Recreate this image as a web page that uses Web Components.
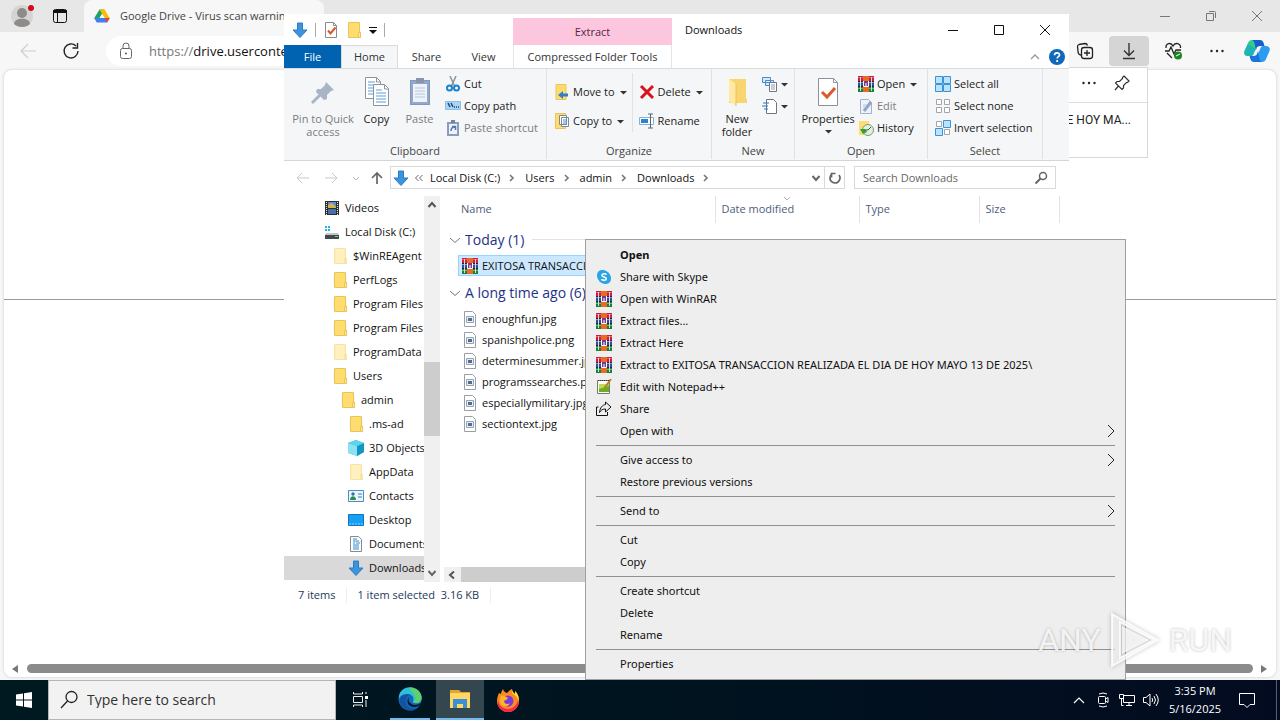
<!DOCTYPE html>
<html lang="en">
<head>
<meta charset="utf-8">
<title>Downloads</title>
<style>
  html, body {
    margin: 0;
    height: 100%;
    overflow: hidden;
  }
  body {
    font: 11px/16px "Open Sans", "Noto Sans", sans-serif;
    color: #111;
    background: #fff;
  }
</style>
</head>
<body>
<desktop-shell>
  <edge-browser></edge-browser>
  <file-explorer slot="window"></file-explorer>
  <context-menu slot="menu">
    <menu-entry strong>Open</menu-entry>
    <menu-entry icon="skype">Share with Skype</menu-entry>
    <menu-entry icon="rar">Open with WinRAR</menu-entry>
    <menu-entry icon="rar">Extract files...</menu-entry>
    <menu-entry icon="rar">Extract Here</menu-entry>
    <menu-entry icon="rar">Extract to EXITOSA TRANSACCION REALIZADA EL DIA DE HOY MAYO 13 DE 2025\</menu-entry>
    <menu-entry icon="notepad">Edit with Notepad++</menu-entry>
    <menu-entry icon="share">Share</menu-entry>
    <menu-entry submenu>Open with</menu-entry>
    <hr>
    <menu-entry submenu>Give access to</menu-entry>
    <menu-entry>Restore previous versions</menu-entry>
    <hr>
    <menu-entry submenu>Send to</menu-entry>
    <hr>
    <menu-entry>Cut</menu-entry>
    <menu-entry>Copy</menu-entry>
    <hr>
    <menu-entry>Create shortcut</menu-entry>
    <menu-entry>Delete</menu-entry>
    <menu-entry>Rename</menu-entry>
    <hr>
    <menu-entry>Properties</menu-entry>
  </context-menu>
  <run-watermark slot="mark"></run-watermark>
  <task-bar slot="taskbar"></task-bar>
</desktop-shell>

<script>
const chevron = (d, color, w = 1) => `<path d="${d}" fill="none" stroke="${color}" stroke-width="${w}"/>`;

const folderShape = (fill, edge) => `
  <path d="M2.500 .5h11v9.500h1v5.500h-12z" fill="${fill}" stroke="${edge}"/>
  <path d="M12.500 10.500h2v5h-2z" fill="#ffe9a2" stroke="${edge}"/>`;

// each entry: [viewBox width, viewBox height, markup]
const ICONS = {
  folder: [16, 16, folderShape("#ffdc70", "#ecc455")],
  folderFaint: [16, 16, folderShape("#fff0bd", "#f5e2a6")],
  down: [16, 16, `<path d="M5.500 1h5v7H15l-7 7.500L1 8h4.500z" fill="#3d94dc" stroke="#2b7cc4"/>`],
  checkDoc: [16, 18, `<path d="M2.500 1.500h8l3 3v12h-11z" fill="#fff" stroke="#8b8b8b"/><path d="M10.500 1.500v3h3" fill="none" stroke="#8b8b8b"/><path d="M5 9.500l2.500 3 5-6" fill="none" stroke="#d9532c" stroke-width="2"/>`],
  rar: [16, 16, `<path fill="#c8203f" d="M0 0h16v5H0z"/><path fill="#ee5584" d="M0 1h16v1H0z"/><path fill="#2750a8" d="M0 6h16v4H0z"/><path fill="#7a9ae2" d="M0 6h16v1H0z"/><path fill="#15803c" d="M0 11h16v5H0z"/><path fill="#4fc373" d="M0 12h16v1H0z"/><path fill="#3a1a24" d="M0 5h16v1H0zM0 10h16v1H0z"/><path fill="#e9d9ce" d="M2 1h1v14H2zM13 1h1v14h-1z"/><path fill="#ea6a1f" d="M5 0h6v16H5z"/><path fill="#7c3a8e" d="M5 5h6v6H5z"/><path d="M5.500 5v5.500h5V5M8 7v3" fill="none" stroke="#fff"/>`],
  skype: [16, 16, `<rect x="1" y="1" width="11" height="11" rx="5" fill="#2aa5e6"/><rect x="4" y="4" width="11" height="11" rx="5" fill="#2aa5e6"/><circle cx="8" cy="8" r="6.300" fill="#2aa5e6"/><path d="M10.500 5.700C9.500 4.200 6 4.300 5.900 6.200c0 2.200 4.400 1.300 4.400 3.500 0 2-3.800 2.100-4.800.4" fill="none" stroke="#fff" stroke-width="1.500"/>`],
  notepad: [16, 16, `<path d="M1.500 1.500h12v13h-12z" fill="#fdfdf5" stroke="#777"/><path d="M3 5h10v8H3z" fill="#b9dd4f"/><path d="M3 10l10-3v6H3z" fill="#6dac26"/><path d="M15 0L8.500 9" stroke="#bf7a2a" stroke-width="2"/><path d="M2 1.500h11" stroke="#333" stroke-dasharray="1 1"/>`],
  share: [16, 16, `<path d="M2.500 6H.5v8.500h11V11" fill="none" stroke="#111"/><path d="M9.500 3.500V1l5.500 5-5.500 5V8C6.500 8 5 9 3.500 11.500 4 6.500 6.500 4 9.500 3.500z" fill="none" stroke="#111"/>`],
  pin: [28, 28, `<path d="M17 4l8 8-3 1-4 4 0 4-3 1-8-8 1-3 4 0 4-4z" fill="#a9b4c6"/><path d="M11 17L3 25" stroke="#a9b4c6" stroke-width="3"/>`],
  copyBig: [28, 32, `<g fill="#fff" stroke="#8e9299"><path d="M2.500 1.500h11l4 4v17h-15z"/><path d="M10.500 8.500h11l4 4v17h-15z"/></g><path d="M5 6h7M5 9h5M5 12h5M5 15h5M5 18h5M13 14h6M13 17h10M13 20h10M13 23h10M13 26h10" stroke="#5f9ddd"/><path d="M13.500 2v4h4M21.500 9v4h4" fill="none" stroke="#8e9299"/>`],
  paste: [28, 32, `<rect x="4.500" y="4.500" width="19" height="24" fill="#94a8cc" stroke="#8397b8"/><path d="M7 8h14v18H7z" fill="#edf2fb"/><path d="M10 2h8v5h-8z" fill="#8795ac"/><path d="M9 12h10M9 15h10M9 18h10M9 21h10" stroke="#b8c5df"/>`],
  cut: [16, 16, `<path d="M5 0l4.500 10M11 0L6.500 10" stroke="#8a929c" stroke-width="1.500"/><circle cx="4.500" cy="12" r="2.500" fill="none" stroke="#1684d0" stroke-width="2"/><circle cx="11.500" cy="12" r="2.500" fill="none" stroke="#1684d0" stroke-width="2"/>`],
  copyPath: [16, 16, `<path d="M.5 3.500h15v8H.5z" fill="#abd5f5" stroke="#8bbfe8"/><path d="M3 5l2 4M6 5l2 4M9 9h1M11 9h1M13 9h1" stroke="#174a7a" stroke-width="1.500"/>`],
  pasteLink: [16, 16, `<path d="M2 2h12v14H2z" fill="#8a9dbd"/><path d="M4 4h8v10H4z" fill="#eef3fb"/><path d="M6 0h4v3H6z" fill="#74859f"/><path d="M6 11c0-3 1-4 4-4M7 6.500h3.500V10" fill="none" stroke="#547ab0" stroke-width="1.500"/>`],
  moveTo: [16, 16, `<path d="M2 .5h10v15H2z" fill="#ffdc70" stroke="#ecc455"/><path d="M14 11H8" stroke="#2f7fcb" stroke-width="3"/><path d="M9 7v8l-5-4z" fill="#2f7fcb"/>`],
  copyTo: [16, 16, `<path d="M1.500 .5h10v15h-10z" fill="#ffdc70" stroke="#ecc455"/><path d="M5.500 2.500h7v9h-7zM7.500 4.500h7v9h-7z" fill="#fff" stroke="#7a8798"/><path d="M9 7h4M9 9h4M9 11h4" stroke="#4b8fd4"/>`],
  cross: [16, 16, `<path d="M2 2l12 12M14 2L2 14" stroke="#d8131c" stroke-width="3"/>`],
  rename: [16, 16, `<path d="M.5 4.500h14v7H.5z" fill="#fff" stroke="#7fb1de"/><path d="M2 6h7v4H2z" fill="#2d83cd"/><path d="M9 1h5M9 15h5M11.500 1v14" stroke="#5e656e"/>`],
  newFolder: [28, 32, `<path d="M6 3h17v20h1v4H6z" fill="#f8d56e"/><path d="M6 3l7 5v22l-7-5z" fill="#ffe9a3"/><path d="M13 8v22" stroke="#eac45b"/>`],
  newItem: [16, 16, `<path d="M.5 1.500h8v5h-8zM3.500 4.500h8v5h-8z" fill="#d5e9fb" stroke="#4a8dcc"/><path d="M7.500 6.500h7v9h-7z" fill="#fff" stroke="#6e7680"/><path d="M9 9h4M9 11h4M9 13h4" stroke="#9099a3"/>`],
  easyAccess: [16, 16, `<path d="M4.500 1.500h7l3 3v11h-10z" fill="#fff" stroke="#6e7680"/><path d="M1 5h6M0 8h6M2 11h4" stroke="#2979c4"/>`],
  propsBig: [28, 32, `<path d="M4.500 2.500h15l4 4v23h-19z" fill="#fff" stroke="#8d9299"/><path d="M19.500 2.500v4h4" fill="none" stroke="#8d9299"/><path d="M8 16l5 5 8-9" fill="none" stroke="#db5a2e" stroke-width="3"/>`],
  edit: [16, 16, `<path d="M2.500 1.500h8l3 3v11h-11z" fill="#eef3fb" stroke="#a3b2ca"/><path d="M13 4l-7 9" stroke="#90a5c7" stroke-width="3"/><path d="M5 9h3M5 7h4" stroke="#b7c5dd"/>`],
  history: [16, 16, `<path d="M1 1h10v14H1z" fill="#ffdc70"/><circle cx="10" cy="10" r="5.500" fill="#e2eee0" stroke="#72a270"/><path d="M2 9l3 5 4-2-2-3z" fill="#2ca336"/><path d="M10 10l3-3M10 10h-3" stroke="#45504a"/>`],
  selAll: [16, 16, `<path d="M.5 .5h7v7h-7zM8.500 .5h7v7h-7zM.5 8.500h7v7h-7zM8.500 8.500h7v7h-7z" fill="#bfe1fa" stroke="#3495dc"/>`],
  selNone: [16, 16, `<path d="M1.500 1.500h5v5h-5zM9.500 1.500h5v5h-5zM1.500 9.500h5v5h-5zM9.500 9.500h5v5h-5z" fill="#fff" stroke="#a2a6aa"/>`],
  selInvert: [16, 16, `<path d="M1.500 1.500h5v5h-5zM9.500 9.500h5v5h-5z" fill="#fff" stroke="#a2a6aa"/><path d="M8.500 .5h7v7h-7zM.5 8.500h7v7h-7z" fill="#bfe1fa" stroke="#3495dc"/>`],
  video: [16, 16, `<path d="M1 1h14v14H1z" fill="#2b2e33"/><path d="M2.500 2v13M13.500 2v13" stroke="#e4e6e8" stroke-dasharray="1 1"/><path d="M4 2h8v6H4z" fill="#5a8fd6"/><path d="M4 5l4-2 4 4v1H4z" fill="#d8b44c"/><path d="M4 9h8v5H4z" fill="#476fa8"/>`],
  disk: [16, 16, `<path d="M1 2h2v2H1zM4 2h2v2H4zM1 5h2v2H1zM4 5h2v2H4z" fill="#25b3ea"/><path d="M2 9h12l1 2H1z" fill="#c3c7ca"/><path d="M1 11h14v4H1z" fill="#43484c"/><path d="M11 12h3v1h-3z" fill="#5be06d"/>`],
  cube: [16, 16, `<path d="M8 0l8 3v9l-7 4-9-3V3z" fill="#35bfe3"/><path d="M0 3l9 3v10l-9-3z" fill="#8ce2f3"/><path d="M9 6l7-3v9l-7 4z" fill="#1496c4"/><path d="M8 0l8 3-7 3-9-3z" fill="#5fd2ec"/>`],
  contact: [16, 16, `<path d="M.5 2.500h15v11H.5z" fill="#e9f5fd" stroke="#4c8dbd"/><circle cx="5" cy="6" r="1.700" fill="#33719a"/><path d="M2 12c0-5 6-5 6 0z" fill="#368554"/><path d="M10 6h4M10 9h4" stroke="#3b7ba8"/>`],
  desktop: [16, 16, `<path d="M.5 2.500h15v11H.5z" fill="#16a0f5" stroke="#1173b5"/><path d="M1 12h14" stroke="#8bd0fb" stroke-dasharray="2 1"/>`],
  document: [16, 16, `<path d="M2.500 .5h8l3 3v12h-11z" fill="#fff" stroke="#858b91"/><path d="M5 3h4M5 5h6M5 7h2M8 7h4M5 9h6M5 11h6M5 13h6" stroke="#3289ca"/>`],
  image: [16, 16, `<path d="M2.500 .5h8l3 3v12h-11z" fill="#fff" stroke="#9a9fa5"/><path d="M4.500 5.500h7v6h-7z" fill="#e6edf5" stroke="#98a3b0"/><path d="M6 7h4v3H6z" fill="#4c6f9a"/>`],
  chevDown: [12, 12, chevron("M1 4l5 4.500L11 4", "#777")],
  caret: [10, 10, chevron("M1.500 3L5 7l3.500-4", "#666", 2)],
  caretFaint: [10, 10, chevron("M2 4l3 3 3-3", "#b4b4b4", 1)],
  caretUp: [10, 10, chevron("M1 7l4-4 4 4", "#999", 1.3)],
  scrollUp: [10, 10, chevron("M1.500 7L5 3l3.500 4", "#555", 2)],
  scrollLeft: [10, 10, chevron("M7 1.500L3 5l4 3.500", "#555", 2)],
  crumb: [8, 10, chevron("M2 2l3 3-3 3", "#777", 1.6)],
  crumbs: [10, 10, chevron("M4.500 2l-3 3 3 3M8.500 2l-3 3 3 3", "#666")],
  submenu: [10, 14, chevron("M1 1l6 6-6 6", "#222")],
  tri: [7, 5, `<path d="M0 1h7L3.500 4.500z" fill="#333"/>`],
  arrowL: [16, 16, chevron("M14 8H2M7 3L2 8l5 5", "#c9c9c9")],
  arrowR: [16, 16, chevron("M2 8h12M9 3l5 5-5 5", "#c9c9c9")],
  arrowU: [16, 16, chevron("M8 14V3M3 8l5-5 5 5", "#666", 1.7)],
  refresh: [16, 16, chevron("M12 5a5 5 0 1 1-7-1M4.500 7.500V3.500h4", "#666", 1.7)],
  lens: [16, 16, `<circle cx="10" cy="6" r="3.500" fill="none" stroke="#666" stroke-width="1.500"/><path d="M7.500 8.500L2.500 13.500" stroke="#666" stroke-width="2"/>`],
  lensBig: [20, 20, `<circle cx="12.500" cy="7" r="5.500" fill="none" stroke="#222" stroke-width="1.300"/><path d="M8.500 11L2 18" stroke="#222" stroke-width="1.300"/>`],
  help: [16, 16, `<circle cx="8" cy="8" r="8" fill="#1068b8"/><path d="M5.500 6.300c0-3.400 5-3.200 5-.3 0 1.700-2.300 1.700-2.300 3.500M8.200 11v2" fill="none" stroke="#fff" stroke-width="1.700"/>`],
  min: [12, 12, chevron("M1 6.500h10", "currentColor")],
  max: [12, 12, chevron("M1.500 1.500h9v9h-9z", "currentColor")],
  close: [12, 12, chevron("M1 1l10 10M11 1L1 11", "currentColor")],
  restore: [12, 12, chevron("M1.500 3.500h7v7h-7zM4 1.500h5.500q1 0 1 1V8", "currentColor")],
  qat: [8, 10, `<path d="M0 2h8v1H0zM0 5h8L4 9z" fill="#111"/>`],
  avatar: [24, 24, `<circle cx="11" cy="12" r="11" fill="#d6d4d2"/><circle cx="11" cy="9" r="5" fill="#8e8c8b"/><path d="M3 20c0-7 16-7 16 0-4 4-12 4-16 0z" fill="#8e8c8b"/><circle cx="20" cy="4" r="3" fill="#d30a1c"/>`],
  workspace: [16, 16, `<rect x="1.500" y="1.500" width="13" height="13" rx="2" fill="none" stroke="#111"/><path d="M1 2h14v3H1z" fill="#111"/><path d="M5.500 4v10" stroke="#111"/>`],
  drive: [16, 16, `<path d="M5.500 1.500h5L8 6 3 14.500.3 10z" fill="#20a35c"/><path d="M10.500 1.500L15.700 10h-5L5.500 1.500z" fill="#fbbc05"/><path d="M.3 10h15.400L13 14.500H3z" fill="#3f7ff1"/><path d="M10.700 10h5L13 14.500z" fill="#e94435"/><path d="M8 6l2.500 4h-5z" fill="#f7f7f7"/>`],
  back: [16, 16, chevron("M16 8H1M8 1L1 8l7 7", "#cdcdcd", 1.2)],
  reload: [18, 18, chevron("M16 9a7 7 0 1 1-2-5M15.500 1v5h-5", "#222", 1.4)],
  lock: [14, 18, `<rect x="1.500" y="6.500" width="11" height="10" rx="2" fill="none" stroke="#666"/><path d="M4 6.500V4a3 3 0 0 1 6 0v2.500" fill="none" stroke="#666"/><circle cx="7" cy="11.500" r="1" fill="#555"/>`],
  collections: [18, 18, `<path d="M5 13C3 13 2 11.500 2 9L1.500 4.500Q1.500 3 3 2.500L9 1.500q2 0 2.500 2" fill="none" stroke="#222" stroke-width="1.300"/><rect x="5.500" y="5.500" width="11" height="11" rx="2.500" fill="none" stroke="#222" stroke-width="1.300"/><path d="M11 8v6M8 11h6" stroke="#222" stroke-width="1.300"/>`],
  download: [16, 18, chevron("M8 1v12M3 8.500l5 5 5-5M2 16.500h12", "#333", 1.4)],
  heart: [18, 18, `<path d="M1 9h4l2-4 3 7 2-4h5M2 6C1.500 1 7 0 9 4c2-4 8-3 7.500 2M3 11l5 5" fill="none" stroke="#222" stroke-width="1.300"/><circle cx="14" cy="13.500" r="4" fill="#1d8426"/><path d="M12 14l4-2" stroke="#fff"/>`],
  dots: [14, 4, `<g fill="#222"><circle cx="1.500" cy="2" r="1.200"/><circle cx="7" cy="2" r="1.200"/><circle cx="12.500" cy="2" r="1.200"/></g>`],
  pinLine: [16, 16, `<path d="M10 1l5 5-1.500 1.500-1 0-3 3v2.500L8 14.500 1.500 8 3 6.500h2.500l3-3V2.500zM4.500 11L1 15" fill="none" stroke="#333" stroke-width="1.200"/>`],
  copilot: [26, 24, `<path d="M8 1h7L9.500 15c-.6 1.600-1.500 2-3 2H4c-3 0-4.500-2-3.500-5L4 4c.8-2 2-3 4-3z" fill="#35c98e"/><path d="M4 5L.5 12C-.5 15 1 17 4 17h2.500c1.500 0 2.400-.4 3-2l2-5z" fill="#1fb5b8"/><path d="M8 1h8c2 0 3 1 3.600 3l.9 3h-3c-2 0-3 .6-3.800 2.500L12 13l-1-7c-.4-2.500-1-4-3-5z" fill="#1560c8"/><path d="M18 23h-7l5.500-14c.6-1.600 1.500-2 3-2H22c3 0 4.500 2 3.500 5L22 20c-.8 2-2 3-4 3z" fill="#2a9df0"/><path d="M18 23h-8c-2 0-3-1-3.600-3l-.9-3h3c2 0 3-.6 3.800-2.500L14 11l1 7c.4 2.500 1 4 3 5z" fill="#1a72dc"/><path d="M13 8l3-1-3.500 9-2.500 1z" fill="#f7f7f7"/>`],
  start: [16, 16, `<path d="M0 2.500l7-1v6H0zM8 1.300L16 0v7.500H8zM0 8.500h7v6l-7-1zM8 8.500h8V16l-8-1.300z" fill="#fff"/>`],
  taskView: [16, 16, `<path d="M1.500 4.500h9v6h-9zM1.500 0v2h9V0M1.500 15v-2h9v2M14 0v2M14 8v7" fill="none" stroke="#f0f0f0"/><path d="M13 4h3v3h-3z" fill="#fff"/>`],
  edge: [24, 24, `<circle cx="12" cy="12" r="11.500" fill="#1566b8"/><path d="M1 9C3-2 20-3 23.500 9c1 6-3 8-7 7-3-1-1-2-1-4 0-3-3-5-6-5-4 0-7 1-8.500 5z" fill="#2fbfd6"/><path d="M12 .5c7 0 12 5 11.500 11-1 5-6 5-8 4 4-4 1-9-3-12z" fill="#60cf68"/><path d="M8 12c-2 6 3 11 11 9-3 3-8 3-12 1-5-3-6-8-4-12 2-2 6-3 9-2-2 0-3.500 2-4 4z" fill="#1254a3"/><path d="M12 10c-3 2-1 7 4 8 3 0 5-1 7-2-2 3-4 4-7 4-6 0-9-7-4-10z" fill="#041a28"/>`],
  files: [24, 24, `<path d="M2 3h9l2 2h9v4H2z" fill="#e5a52b"/><path d="M2 6h20v15H2z" fill="#ffd766"/><path d="M5 12h14v9h-4v-4H9v4H5z" fill="#3c8fd3"/>`],
  firefox: [24, 24, `<path d="M3 5l2 1c0-2 1-3 2-5 1 3 2 3 4 4 2-1 2-3 5-4 0 3 2 4 3 5V3c3 3 4 6 4 10 0 6-5 11-11 11S1 19 1 13c0-3 1-6 2-8z" fill="#ff8a1e"/><path d="M2 12c1 7 6 9 11 9 5-1 8-4 9-9 2 7-4 12-10 12S0 19 2 12z" fill="#f6294c"/><path d="M16 1c0 3 2 4 3 5V3c3 3 4 6 4 10-2-5-4-6-7-8z" fill="#ffdf3c"/><circle cx="12" cy="13" r="5.500" fill="#7b3bd6"/><path d="M5 8c3-1 5 1 7 2-1 2-3 2-4 3 0 3 4 4 6 2-2 5-10 4-10-2z" fill="#ffb52b"/>`],
  trayUp: [12, 12, chevron("M1 9l5-5 5 5", "#fff", 1.2)],
  camera: [16, 16, `<rect x="3.500" y="4.500" width="7" height="7" rx="1" fill="none" stroke="#fff"/><path d="M10.500 7l2.500-1.500v5L10.500 9M4 2q4-2 8 0M4 14q4 2 8 0" fill="none" stroke="#fff"/>`],
  network: [16, 16, `<path d="M4.500 3.500h11v7h-11zM10 10.500v3M7 13.500h6M.5 2.500h4v4h-4zM2.500 6.500v7h2" fill="#030d1e" stroke="#fff"/>`],
  sound: [16, 16, `<path d="M.5 5.500H3l4-3.500v12l-4-3.500H.5zM9 6q1.500 2 0 4M11 4q3 4 0 8M13 2q4.500 6 0 12" fill="none" stroke="#fff"/>`],
  notify: [18, 18, `<path d="M1.500 2.500h15v11H12l-3 3-3-3H1.500z" fill="none" stroke="#fff"/>`],
  play: [54, 60, `<path d="M4 4L50 30 4 56zM12 12v36l34-18z" fill="#ffffffa0" fill-rule="evenodd" stroke="#fffc" stroke-width="2"/><path d="M14 16v28l27-14z" fill="#fff" opacity=".7"/>`]
};

const html = (strings, ...values) => {
  const template = document.createElement("template");
  template.innerHTML = String.raw({ raw: strings }, ...values);
  return template;
};

class BaseElement extends HTMLElement {
  constructor() {
    super();
    this.attachShadow({ mode: "open" });
  }
  connectedCallback() {
    this.shadowRoot.replaceChildren(this.render().content.cloneNode(true));
  }
}

const RESET = `
  * { box-sizing: border-box; }
  button, input { font: inherit; color: inherit; border: 0; margin: 0; padding: 0; background: none; outline: 0; }
  a { color: inherit; text-decoration: none; }
`;

customElements.define("ui-icon", class extends BaseElement {
  render() {
    const [w, h, body] = ICONS[this.getAttribute("name")];
    const width = this.getAttribute("w") || w;
    return html`<style>
      :host { display: inline-flex; flex: none; vertical-align: top; }
      svg { display: block; }
    </style><svg width="${width}" height="${width * h / w}" viewBox="0 0 ${w} ${h}" aria-hidden="true">${body}</svg>`;
  }
});

customElements.define("desktop-shell", class extends BaseElement {
  render() {
    return html`<style>
      :host { display: grid; grid-template-rows: 1fr 40px; height: 100vh; overflow: hidden; }
      .area { position: relative; display: grid; min-height: 0; }
      ::slotted([slot="window"]) { position: absolute; left: 284px; top: 14px; }
      ::slotted([slot="menu"]) { position: absolute; left: 585px; top: 239px; }
      ::slotted([slot="mark"]) { position: absolute; right: 48px; bottom: 10px; }
    </style>
    <main class="area">
      <slot></slot>
      <slot name="window"></slot>
      <slot name="menu"></slot>
      <slot name="mark"></slot>
    </main>
    <slot name="taskbar"></slot>`;
  }
});

customElements.define("edge-browser", class extends BaseElement {
  render() {
    return html`<style>${RESET}
      :host { display: grid; grid-template-rows: 32px 38px 1fr; min-width: 0; background: #f5f7f9; }
      .strip { display: flex; background: #e7e7e7; }
      .who { display: flex; align-items: center; gap: 17px; width: 84px; padding-left: 11px; }
      .tab { display: flex; align-items: center; gap: 10px; width: 240px; padding-left: 10px; background: #f7f7f7; border-radius: 8px 8px 0 0; color: #444; }
      .sys { display: flex; margin-left: auto; color: #777; }
      .sys button { display: grid; place-items: center; width: 46px; }
      .bar { display: flex; align-items: center; background: #f7f7f7; padding: 0 5px 0 20px; }
      .bar > button { display: grid; place-items: center; width: 44px; height: 30px; }
      .bar > button:first-child { width: 16px; }
      .bar > button:nth-child(2) { width: 70px; }
      .bar > button.on { width: 40px; margin: 0 2px; background: #d5d5d5; border-radius: 4px; }
      .bar > button:last-child { width: 36px; }
      .url { display: flex; align-items: center; gap: 16px; flex: 1; height: 30px; padding-left: 13px; border-radius: 15px; background: #fff; font-size: 13px; color: #777; }
      .url b { font-weight: 400; color: #111; }
      .page { position: relative; display: flex; flex-direction: column; justify-content: space-between; margin: 0 4px 3px; border-radius: 8px; background: #fff; box-shadow: 0 0 3px #c4c8cc; }
      hr { width: 100%; margin: 229px 0 0; border: 0; border-top: 1px solid #999; }
      .scroll { display: flex; align-items: center; gap: 8px; padding: 4px 8px; }
      .scroll i { border: 4px solid transparent; border-right: 6px solid #777; border-left: 0; margin-right: 1px; }
      .scroll i:last-child { border-left: 6px solid #777; border-right: 0; }
      .scroll div { flex: 1; height: 9px; border-radius: 5px; background: #8b8b8b; }
      .flyout { position: absolute; top: -3px; right: 128px; width: 340px; height: 91px; border: 1px solid #d8d8d8; background: #fff; }
      .flyout header { display: flex; align-items: center; justify-content: flex-end; gap: 18px; height: 35px; padding: 0 17px 4px 0; border-bottom: 1px solid #ddd; }
      .flyout p { margin: 9px 16px; text-align: right; font: 12px/16px Roboto, sans-serif; color: #222; }
    </style>
    <div class="strip">
      <div class="who"><ui-icon name="avatar" w="24"></ui-icon><ui-icon name="workspace"></ui-icon></div>
      <div class="tab"><ui-icon name="drive"></ui-icon>Google Drive - Virus scan warning</div>
      <div class="sys">
        <button aria-label="Minimize"><ui-icon name="min"></ui-icon></button>
        <button aria-label="Restore"><ui-icon name="restore"></ui-icon></button>
        <button aria-label="Close"><ui-icon name="close"></ui-icon></button>
      </div>
    </div>
    <div class="bar">
      <button aria-label="Back"><ui-icon name="back"></ui-icon></button>
      <button aria-label="Refresh"><ui-icon name="reload"></ui-icon></button>
      <div class="url"><ui-icon name="lock"></ui-icon><span>https://<b>drive.usercontent</b></span></div>
      <button aria-label="Collections"><ui-icon name="collections"></ui-icon></button>
      <button class="on" aria-label="Downloads"><ui-icon name="download"></ui-icon></button>
      <button aria-label="Browser essentials"><ui-icon name="heart"></ui-icon></button>
      <button aria-label="Settings"><ui-icon name="dots"></ui-icon></button>
      <button aria-label="Copilot"><ui-icon name="copilot"></ui-icon></button>
    </div>
    <div class="page">
      <hr>
      <div class="scroll"><i></i><div></div><i></i></div>
      <aside class="flyout">
        <header><ui-icon name="dots"></ui-icon><ui-icon name="pinLine"></ui-icon></header>
        <p>DE HOY MA...</p>
      </aside>
    </div>`;
  }
});

customElements.define("ribbon-button", class extends BaseElement {
  render() {
    const large = this.hasAttribute("large");
    const label = this.childNodes.length ? `<span><slot></slot></span>` : "";
    const tri = this.hasAttribute("arrow") ? `<ui-icon name="tri"></ui-icon>` : "";
    return html`<style>${RESET}
      :host { display: block; }
      button { display: flex; align-items: center; gap: 3px; height: 22px; white-space: nowrap; color: #222; }
      button:disabled { color: #7c7c7c; }
      span + ui-icon[name="tri"] { margin-left: 2px; }
      :host([large]) button { flex-direction: column; gap: 0; width: 100%; height: auto; padding-top: 3px; line-height: 13px; text-align: center; }
      :host([large]) span { margin-top: 4px; }
      :host([large]) ui-icon[name="tri"] { margin: 4px 0 0; }
      .art { display: grid; place-items: center; height: 32px; }
    </style>
    <button ${this.hasAttribute("off") ? "disabled" : ""}>
      <div class="${large ? "art" : ""}"><ui-icon name="${this.getAttribute("icon")}"></ui-icon></div>
      ${label}${tri}
    </button>`;
  }
});

customElements.define("ribbon-group", class extends BaseElement {
  render() {
    return html`<style>
      :host { display: flex; flex-direction: column; justify-content: space-between; flex: none; padding-top: 4px; border-right: 1px solid #dfe1e3; box-sizing: border-box; }
      .body { display: flex; padding-left: 7px; }
      footer { text-align: center; color: #444; }
    </style>
    <div class="body"><slot></slot></div>
    <footer>${this.getAttribute("label")}</footer>`;
  }
});

customElements.define("explorer-ribbon", class extends BaseElement {
  render() {
    return html`<style>
      :host { display: flex; height: 93px; padding-bottom: 1px; border-top: 1px solid #dadbdc; border-bottom: 1px solid #d5d6d7; background: #f5f6f7; box-sizing: border-box; }
      .col { display: flex; flex-direction: column; }
      .wide { gap: 7px; padding-top: 8px; }
      .split { margin-right: 6px; padding-right: 5px; border-right: 1px solid #e0e2e4; }
      .clip { width: 263px; } .org { width: 165px; } .new { width: 83px; } .open { width: 133px; } .sel { width: 115px; }
      .w1 { width: 64px; } .w2 { width: 43px; } .w3 { width: 52px; } .w4 { width: 36px; }
      .icons { padding-left: 7px; }
      .gap { padding-left: 4px; }
    </style>
    <ribbon-group class="clip" label="Clipboard">
      <ribbon-button class="w1" large off icon="pin">Pin to Quick<br>access</ribbon-button>
      <ribbon-button class="w2" large icon="copyBig">Copy</ribbon-button>
      <ribbon-button class="w2" large off icon="paste">Paste</ribbon-button>
      <div class="col gap">
        <ribbon-button icon="cut">Cut</ribbon-button>
        <ribbon-button icon="copyPath">Copy path</ribbon-button>
        <ribbon-button off icon="pasteLink">Paste shortcut</ribbon-button>
      </div>
    </ribbon-group>
    <ribbon-group class="org" label="Organize">
      <div class="col wide split">
        <ribbon-button icon="moveTo" arrow>Move to</ribbon-button>
        <ribbon-button icon="copyTo" arrow>Copy to</ribbon-button>
      </div>
      <div class="col wide">
        <ribbon-button icon="cross" arrow>Delete</ribbon-button>
        <ribbon-button icon="rename">Rename</ribbon-button>
      </div>
    </ribbon-group>
    <ribbon-group class="new" label="New">
      <ribbon-button class="w4" large icon="newFolder">New<br>folder</ribbon-button>
      <div class="col icons">
        <ribbon-button icon="newItem" arrow></ribbon-button>
        <ribbon-button icon="easyAccess" arrow></ribbon-button>
      </div>
    </ribbon-group>
    <ribbon-group class="open" label="Open">
      <ribbon-button class="w3" large icon="propsBig" arrow>Properties</ribbon-button>
      <div class="col gap">
        <ribbon-button icon="rar" arrow>Open</ribbon-button>
        <ribbon-button icon="edit" off>Edit</ribbon-button>
        <ribbon-button icon="history">History</ribbon-button>
      </div>
    </ribbon-group>
    <ribbon-group class="sel" label="Select">
      <div class="col">
        <ribbon-button icon="selAll">Select all</ribbon-button>
        <ribbon-button icon="selNone">Select none</ribbon-button>
        <ribbon-button icon="selInvert">Invert selection</ribbon-button>
      </div>
    </ribbon-group>`;
  }
});

customElements.define("nav-tree", class extends BaseElement {
  render() {
    const nodes = [
      [0, "video", "Videos"], [0, "disk", "Local Disk (C:)"],
      [1, "folderFaint", "$WinREAgent"], [1, "folder", "PerfLogs"],
      [1, "folder", "Program Files"], [1, "folder", "Program Files"],
      [1, "folderFaint", "ProgramData"], [1, "folder", "Users"],
      [2, "folder", "admin"], [3, "folder", ".ms-ad"], [3, "cube", "3D Objects"],
      [3, "folderFaint", "AppData"], [3, "contact", "Contacts"],
      [3, "desktop", "Desktop"], [3, "document", "Documents"], [3, "down", "Downloads"]
    ];
    return html`<style>${RESET}
      :host { display: flex; width: 156px; min-height: 0; }
      nav { flex: 1; min-width: 0; overflow: hidden; }
      a { display: flex; align-items: center; gap: 5px; height: 24px; white-space: nowrap; }
      a:last-child { background: #d9d9d9; }
      .l0 { padding-left: 40px; } .l1 { padding-left: 48px; } .l2 { padding-left: 56px; } .l3 { padding-left: 64px; }
      .scroll { display: flex; flex-direction: column; justify-content: space-between; align-items: center; width: 16px; background: #f0f0f0; padding: 4px 0; }
      .thumb { width: 100%; height: 74px; margin-top: 144px; margin-bottom: auto; background: #cdcdcd; }
      .scroll ui-icon:first-child { margin-bottom: 8px; }
    </style>
    <nav>${nodes.map(([lvl, icon, name]) => `<a class="l${lvl}" href="#"><ui-icon name="${icon}"></ui-icon>${name}</a>`).join("")}</nav>
    <div class="scroll"><ui-icon name="scrollUp"></ui-icon><div class="thumb"></div><ui-icon name="caret"></ui-icon></div>`;
  }
});

customElements.define("file-list", class extends BaseElement {
  render() {
    const row = (name, icon = "image", cls = "") =>
      `<tr class="${cls}"><td><div><ui-icon name="${icon}"></ui-icon>${name}</div></td><td></td><td></td><td></td></tr>`;
    const group = name => `<tr class="group"><th colspan="4" scope="rowgroup"><div><ui-icon name="chevDown"></ui-icon>${name}<hr></div></th></tr>`;
    const old = ["enoughfun.jpg", "spanishpolice.png", "determinesummer.jpg", "programssearches.png", "especiallymilitary.jpg", "sectiontext.jpg"];
    return html`<style>${RESET}
      :host { display: flex; flex-direction: column; justify-content: space-between; flex: 1; min-width: 0; padding-left: 4px; }
      table { width: 615px; border-collapse: collapse; table-layout: fixed; }
      th, td { padding: 0; font-weight: 400; text-align: left; }
      thead th { position: relative; height: 27px; padding: 0 0 2px 6px; border-right: 1px solid #e3e3e3; color: #4c607a; }
      thead th:first-child { padding-left: 17px; }
      thead ui-icon { position: absolute; top: -3px; left: 66px; }
      .group th { height: 32px; padding: 1px 0 0 5px; font-size: 14px; color: #1e3287; }
      .group div { display: flex; align-items: center; gap: 4px; }
      .group hr { flex: 1; margin: 0 0 0 4px; border: 0; border-top: 1px solid #dfe3ea; }
      td { height: 21px; }
      td div { display: flex; align-items: center; gap: 4px; height: 21px; margin-left: 14px; padding-left: 4px; white-space: nowrap; overflow: hidden; }
      .picked div { background: #cce8ff; border: 1px solid #99d1ff; padding-left: 3px; }
      .scroll { display: flex; align-items: center; gap: 4px; height: 15px; padding-left: 3px; background: #f0f0f0; }
      .scroll div { flex: 1; height: 15px; background: #cdcdcd; }
    </style>
    <table>
      <colgroup><col style="width:271px"><col style="width:144px"><col style="width:120px"><col style="width:80px"></colgroup>
      <thead><tr><th>Name</th><th>Date modified<ui-icon name="caretFaint"></ui-icon></th><th>Type</th><th>Size</th></tr></thead>
      <tbody>
        ${group("Today (1)")}
        ${row("EXITOSA TRANSACCION", "rar", "picked")}
        ${group("A long time ago (6)")}
        ${old.map(n => row(n)).join("")}
      </tbody>
    </table>
    <div class="scroll"><ui-icon name="scrollLeft"></ui-icon><div></div></div>`;
  }
});

customElements.define("file-explorer", class extends BaseElement {
  render() {
    const crumbs = ["Local Disk (C:)", "Users", "admin", "Downloads"];
    return html`<style>${RESET}
      :host { display: flex; flex-direction: column; width: 785px; background: #fff; }
      .head { display: grid; grid-template: 31px 23px / 229px 159px 1fr; }
      .qat { display: flex; align-items: center; gap: 7px; padding-left: 8px; }
      .qat i { width: 1px; height: 14px; background: #aaa; }
      .ctx { display: flex; align-items: flex-end; }
      .ctx span { flex: 1; height: 27px; background: #fdc6df; color: #5c2440; line-height: 28px; text-align: center; }
      .title { display: flex; align-items: center; padding-left: 13px; color: #111; }
      .title div { display: flex; margin-left: auto; padding-right: 1px; }
      .title button { display: grid; place-items: center; width: 46px; height: 31px; }
      .tabs { display: flex; }
      .tabs button { width: 57px; color: #333; }
      .tabs .file { background: #0063b1; color: #fff; }
      .tabs .home { background: #f5f6f7; border: 1px solid #dadbdc; border-bottom: 0; }
      .tool { border: solid #e5e5e5; border-width: 0 1px; color: #333; }
      .aid { display: flex; align-items: center; justify-content: flex-end; gap: 9px; padding-right: 4px; }
      .address { display: flex; align-items: center; height: 35px; padding: 0 13px 2px 11px; }
      .address > ui-icon { margin-right: 12px; }
      .address > ui-icon[name="caretFaint"] { margin-right: 8px; }
      .address > ui-icon[name="arrowU"] { margin-right: 5px; }
      .path { display: flex; align-items: center; flex: 1; height: 23px; border: 1px solid #d9d9d9; padding-left: 2px; white-space: nowrap; }
      .path ui-icon[name="crumbs"] { margin: 0 6px 0 5px; }
      .path ui-icon[name="crumb"] { margin: 0 9px 0 8px; }
      .path button { display: grid; place-items: center; width: 20px; height: 21px; }
      .path button:last-child { border-left: 1px solid #d9d9d9; }
      .path ui-icon[name="caret"] { margin-left: 4px; }
      .path .more { margin-left: auto; }
      .find { display: flex; align-items: center; width: 202px; height: 23px; margin-left: 9px; padding: 0 6px 0 8px; border: 1px solid #d9d9d9; }
      .find input { flex: 1; min-width: 0; }
      .find input::placeholder { color: #666; opacity: 1; }
      .body { display: flex; height: 386px; }
      .status { display: flex; align-items: center; height: 25px; padding-left: 14px; color: #1e395b; white-space: pre; }
      .status span { padding-right: 11px; margin-right: 10px; border-right: 1px solid #eee; }
    </style>
    <div class="head">
      <div class="qat"><ui-icon name="down"></ui-icon><i></i><ui-icon name="checkDoc" w="16"></ui-icon><ui-icon name="folder"></ui-icon><ui-icon name="qat"></ui-icon><i></i></div>
      <div class="ctx"><span>Extract</span></div>
      <div class="title">Downloads
        <div>
          <button aria-label="Minimize"><ui-icon name="min"></ui-icon></button>
          <button aria-label="Maximize"><ui-icon name="max"></ui-icon></button>
          <button aria-label="Close"><ui-icon name="close"></ui-icon></button>
        </div>
      </div>
      <div class="tabs"><button class="file">File</button><button class="home">Home</button><button>Share</button><button>View</button></div>
      <button class="tool">Compressed Folder Tools</button>
      <div class="aid"><ui-icon name="caretUp"></ui-icon><ui-icon name="help"></ui-icon></div>
    </div>
    <explorer-ribbon></explorer-ribbon>
    <div class="address">
      <ui-icon name="arrowL"></ui-icon><ui-icon name="arrowR"></ui-icon><ui-icon name="caretFaint"></ui-icon><ui-icon name="arrowU"></ui-icon>
      <div class="path"><ui-icon name="down"></ui-icon><ui-icon name="crumbs"></ui-icon>
        ${crumbs.map(c => `<a href="#">${c}</a><ui-icon name="crumb"></ui-icon>`).join("")}
        <button class="more" aria-label="Previous locations"><ui-icon name="caret"></ui-icon></button>
        <button aria-label="Refresh"><ui-icon name="refresh"></ui-icon></button>
      </div>
      <label class="find"><input type="text" placeholder="Search Downloads" aria-label="Search Downloads"><ui-icon name="lens"></ui-icon></label>
    </div>
    <div class="body"><nav-tree></nav-tree><file-list></file-list></div>
    <div class="status"><span>7 items</span><span>1 item selected  3.16 KB</span></div>`;
  }
});

customElements.define("context-menu", class extends BaseElement {
  render() {
    return html`<style>
      :host { display: block; box-sizing: border-box; width: 541px; padding: 4px 2px; border: 1px solid #a0a0a0; background: #eee; font-family: "Noto Sans", "Open Sans", sans-serif; }
      ::slotted(hr) { margin: 3px 8px; border: 0; border-top: 1px solid #919191; }
    </style><slot></slot>`;
  }
});

customElements.define("menu-entry", class extends BaseElement {
  render() {
    const icon = this.getAttribute("icon");
    return html`<style>${RESET}
      :host { display: block; }
      button { display: flex; align-items: center; width: 100%; height: 22px; padding: 0 6px 0 8px; text-align: left; white-space: nowrap; }
      .icon { width: 24px; height: 16px; }
      :host([strong]) { font-weight: 700; }
      .text { flex: 1; }
    </style>
    <button>
      <div class="icon">${icon ? `<ui-icon name="${icon}"></ui-icon>` : ""}</div>
      <span class="text"><slot></slot></span>
      ${this.hasAttribute("submenu") ? `<ui-icon name="submenu"></ui-icon>` : ""}
    </button>`;
  }
});

customElements.define("run-watermark", class extends BaseElement {
  render() {
    return html`<style>
      :host { display: flex; align-items: center; gap: 7px; font: 32px/60px Roboto, "Liberation Sans", sans-serif; color: #ffffffd0; text-shadow: 0 0 3px #0004; pointer-events: none; }
      ui-icon { filter: drop-shadow(0 0 2px #0004); }
    </style>
    <span>ANY</span><ui-icon name="play"></ui-icon><span>RUN</span>`;
  }
});

customElements.define("task-bar", class extends BaseElement {
  render() {
    return html`<style>${RESET}
      :host { display: flex; background: linear-gradient(90deg, #001820, #00141f 50%, #030b20); color: #fff; }
      button { display: grid; place-items: center; width: 48px; height: 40px; }
      .find { display: flex; align-items: center; gap: 8px; width: 288px; padding-left: 10px; border: 1px solid #b5b5b5; background: #f2f2f2; font-size: 14px; }
      .find input { flex: 1; min-width: 0; }
      .find input::placeholder { color: #333; opacity: 1; }
      .run { border-bottom: 2px solid #76b9ed; }
      .edge { width: 40px; margin: 0 6px; }
      .on { background: #34474e; }
      .tray { display: flex; margin-left: auto; }
      .tray button { width: 24px; }
      .tray time { width: 64px; padding-top: 2px; line-height: 18px; text-align: center; }
      .tray .note { width: 40px; }
      .tray .peek { width: 4px; margin-left: 9px; border-left: 1px solid #526070; }
    </style>
    <button aria-label="Start"><ui-icon name="start"></ui-icon></button>
    <label class="find"><ui-icon name="lensBig"></ui-icon><input type="text" placeholder="Type here to search" aria-label="Type here to search"></label>
    <button aria-label="Task View"><ui-icon name="taskView"></ui-icon></button>
    <button class="run edge" aria-label="Edge"><ui-icon name="edge"></ui-icon></button>
    <button class="run on" aria-label="File Explorer"><ui-icon name="files"></ui-icon></button>
    <button aria-label="Firefox"><ui-icon name="firefox"></ui-icon></button>
    <div class="tray">
      <button aria-label="Show hidden icons"><ui-icon name="trayUp"></ui-icon></button>
      <button aria-label="Camera"><ui-icon name="camera"></ui-icon></button>
      <button aria-label="Network"><ui-icon name="network"></ui-icon></button>
      <button aria-label="Volume"><ui-icon name="sound"></ui-icon></button>
      <time>3:35 PM<br>5/16/2025</time>
      <button class="note" aria-label="Notifications"><ui-icon name="notify"></ui-icon></button>
      <button class="peek" aria-label="Show desktop"></button>
    </div>`;
  }
});
</script>
</body>
</html>
